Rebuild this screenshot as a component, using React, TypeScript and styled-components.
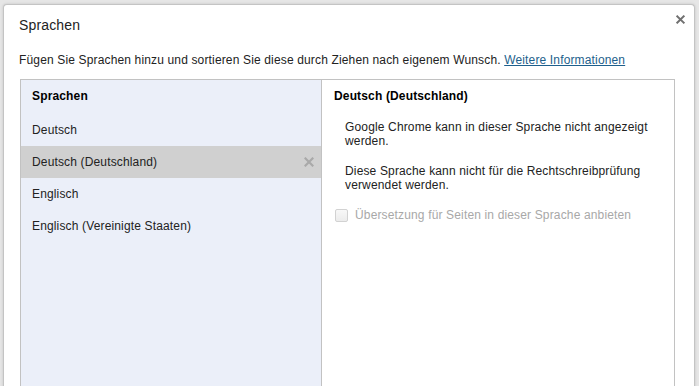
import styled, { createGlobalStyle } from 'styled-components'

const GlobalStyle = createGlobalStyle`
    html, body {
        margin: 0;
        padding: 0;
        height: 100%;
        overflow: hidden;
        background: #e6e6e6;
        font-family: "Liberation Sans", Arial, sans-serif;
        letter-spacing: 0.15px;
    }
    #root {
        height: 100%;
    }
`

const Page = styled.div`
    height: 100%;
    padding: 4px 4px 0 3px;
    box-sizing: border-box;
`

const Dialog = styled.div`
    position: relative;
    height: 420px;
    background: #fff;
    border: 1px solid #c4c4c4;
    border-bottom: none;
    border-radius: 4px 4px 0 0;
    box-shadow: 0 0 3px rgba(0, 0, 0, 0.15);
    box-sizing: border-box;
    padding: 0 0 0 15px;
    color: #222;
`

const Title = styled.h1`
    margin: 0;
    padding-top: 12px;
    height: 26px;
    font-size: 14px;
    font-weight: normal;
    line-height: 17px;
    color: #222;
`

const Close = styled.button`
    position: absolute;
    top: 7px;
    right: 7px;
    width: 14px;
    height: 14px;
    padding: 0;
    border: none;
    background: none;
    cursor: pointer;
    display: flex;
    align-items: center;
    justify-content: center;
`

const Description = styled.p`
    margin: 0;
    padding-top: 10px;
    font-size: 12px;
    line-height: 15px;
    height: 26px;
`

const Link = styled.a`
    color: #1d5f8c;
    text-decoration: underline;
`

const Panels = styled.div`
    display: grid;
    grid-template-columns: 301px 1fr;
    width: 655px;
    height: 340px;
    margin-left: 1px;
    border: 1px solid #c2c2c2;
    box-sizing: border-box;
`

const LeftPanel = styled.div`
    background: #ebeff9;
    border-right: 1px solid #c2c2c2;
`

const ListHeader = styled.div`
    box-sizing: border-box;
    height: 34px;
    padding: 0 0 2px 11px;
    display: flex;
    align-items: center;
    font-size: 12px;
    font-weight: bold;
    color: #000;
`

const Row = styled.div<{ $selected?: boolean }>`
    height: 32px;
    padding: 0 7px 0 11px;
    display: flex;
    align-items: center;
    justify-content: space-between;
    font-size: 12px;
    color: #222;
    background: ${p => (p.$selected ? '#d0d0d0' : 'transparent')};
`

const RightPanel = styled.div`
    padding-left: 12px;
`

const DetailHeader = styled.div`
    box-sizing: border-box;
    height: 34px;
    padding-bottom: 3px;
    display: flex;
    align-items: center;
    font-size: 12px;
    font-weight: bold;
    color: #000;
`

const Para = styled.p`
    margin: 0 0 10px 11px;
    padding-top: 6px;
    font-size: 12px;
    line-height: 14px;
    color: #222;
    width: 305px;
`

const CheckRow = styled.label`
    display: flex;
    align-items: center;
    gap: 7px;
    margin: 12px 0 0 1px;
    height: 22px;
    font-size: 12px;
    color: #a8a8a8;
`

const Box = styled.span`
    width: 11px;
    height: 11px;
    border: 1px solid #d2d2d2;
    border-radius: 2px;
    background: linear-gradient(#f8f8f8, #ececec);
`

const Cross = ({ color, size }: { color: string, size: number }) => (
    <svg width={size} height={size} viewBox="0 0 10 10">
        <path d="M1.5 1.5 L8.5 8.5 M8.5 1.5 L1.5 8.5" stroke={color} strokeWidth="2.2" strokeLinecap="square" />
    </svg>
)

const languages = ['Deutsch', 'Deutsch (Deutschland)', 'Englisch', 'Englisch (Vereinigte Staaten)']

const App = () => {
    const selected = 'Deutsch (Deutschland)'

    return (
        <Page>
            <GlobalStyle />
            <Dialog>
                <Title>Sprachen</Title>
                <Close aria-label="Schließen"><Cross color="#707070" size={9} /></Close>
                <Description>
                    Fügen Sie Sprachen hinzu und sortieren Sie diese durch Ziehen nach eigenem Wunsch.{' '}
                    <Link href="#">Weitere Informationen</Link>
                </Description>
                <Panels>
                    <LeftPanel>
                        <ListHeader>Sprachen</ListHeader>
                        {languages.map(lang => (
                            <Row key={lang} $selected={lang === selected}>
                                <span>{lang}</span>
                                {lang === selected && <Cross color="#a9a9a9" size={10} />}
                            </Row>
                        ))}
                    </LeftPanel>
                    <RightPanel>
                        <DetailHeader>{selected}</DetailHeader>
                        <Para>Google Chrome kann in dieser Sprache nicht angezeigt werden.</Para>
                        <Para>Diese Sprache kann nicht für die Rechtschreibprüfung verwendet werden.</Para>
                        <CheckRow>
                            <Box />
                            Übersetzung für Seiten in dieser Sprache anbieten
                        </CheckRow>
                    </RightPanel>
                </Panels>
            </Dialog>
        </Page>
    )
}

export default App
